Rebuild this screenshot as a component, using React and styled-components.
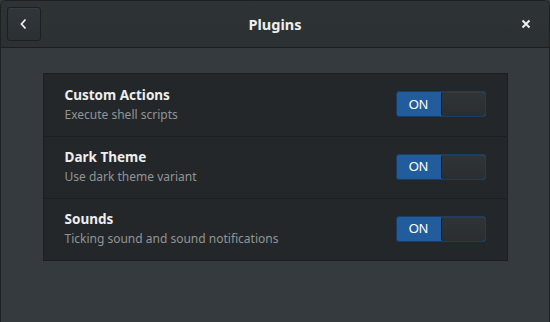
import React from 'react';
import styled, { createGlobalStyle } from 'styled-components';

const GlobalStyle = createGlobalStyle`
  html, body {
    margin: 0;
    padding: 0;
    background: #353a3e;
  }
  body {
    font-family: "Noto Sans", "Open Sans", sans-serif;
    color: #eeeeec;
  }
`;

const Window = styled.div`
  width: 550px;
  height: 322px;
  box-sizing: border-box;
  background: #353a3e;
  border: 1px solid #1e2122;
  border-bottom: none;
  border-radius: 6px 6px 0 0;
  overflow: hidden;
  display: flex;
  flex-direction: column;
`;

const HeaderBar = styled.header`
  height: 46px;
  flex-shrink: 0;
  display: grid;
  grid-template-columns: 48px 1fr 48px;
  align-items: center;
  background: linear-gradient(#2e3436, #2b3032);
  border-bottom: 1px solid #1c1f20;
`;

const BackButton = styled.button`
  width: 34px;
  height: 34px;
  margin-left: 6px;
  padding: 0;
  display: flex;
  align-items: center;
  justify-content: center;
  background: linear-gradient(#30363a, #2b3033);
  border: 1px solid #1b1f20;
  border-radius: 3px;
  box-shadow: inset 0 1px rgba(255, 255, 255, 0.04);
`;

const Title = styled.h1`
  margin: 0;
  text-align: center;
  font-size: 14.5px;
  font-weight: 700;
  color: #eeeeec;
`;

const CloseButton = styled.button`
  justify-self: center;
  width: 20px;
  height: 20px;
  padding: 0;
  margin-left: 2px;
  display: flex;
  align-items: center;
  justify-content: center;
  background: none;
  border: none;
`;

const Content = styled.main`
  flex: 1;
  padding-top: 25px;
  display: flex;
  justify-content: center;
  align-items: flex-start;
`;

const List = styled.ul`
  list-style: none;
  margin: 0;
  padding: 0;
  width: 465px;
  box-sizing: border-box;
  background: #232729;
  border: 1px solid #1b1f20;
`;

const Row = styled.li`
  height: 62px;
  box-sizing: border-box;
  display: flex;
  align-items: center;
  justify-content: space-between;
  padding: 0 21px 2px 21px;
  border-top: ${(p) => (p.first ? 'none' : '1px solid #1d2022')};
`;

const Labels = styled.div`
  display: flex;
  flex-direction: column;
  gap: 2px;
`;

const Name = styled.span`
  font-size: 13.5px;
  font-weight: 700;
  color: #eeeeec;
`;

const Description = styled.span`
  font-size: 12px;
  color: #929596;
`;

const Switch = styled.div`
  width: 90px;
  height: 26px;
  box-sizing: border-box;
  display: flex;
  border: 1px solid #1b3d63;
  border-radius: 3px;
  background: #215d9c;
  overflow: hidden;
`;

const SwitchLabel = styled.span`
  width: 44px;
  display: flex;
  align-items: center;
  justify-content: center;
  font-family: "Liberation Sans", Arial, sans-serif;
  font-size: 13px;
  font-weight: 400;
  color: #ffffff;
`;

const Knob = styled.span`
  flex: 1;
  background: linear-gradient(#2f3437, #2a2e31);
  border-left: 1px solid #1b1f20;
  border-radius: 2px;
  box-shadow: inset 0 1px rgba(255, 255, 255, 0.03);
`;

const plugins = [
  { name: 'Custom Actions', description: 'Execute shell scripts' },
  { name: 'Dark Theme', description: 'Use dark theme variant' },
  { name: 'Sounds', description: 'Ticking sound and sound notifications' },
];

export default function App() {
  return (
    <>
      <GlobalStyle />
      <Window>
        <HeaderBar>
          <BackButton aria-label="Back">
            <svg width="10" height="12" viewBox="0 0 10 12">
              <path d="M6.5 1.5 L2.5 6 L6.5 10.5" fill="none" stroke="#eeeeec" strokeWidth="1.8" />
            </svg>
          </BackButton>
          <Title>Plugins</Title>
          <CloseButton aria-label="Close">
            <svg width="10" height="10" viewBox="0 0 10 10">
              <path d="M1.5 1.5 L8.5 8.5 M8.5 1.5 L1.5 8.5" stroke="#eeeeec" strokeWidth="2" />
            </svg>
          </CloseButton>
        </HeaderBar>
        <Content>
          <List>
            {plugins.map((plugin, i) => (
              <Row key={plugin.name} first={i === 0}>
                <Labels>
                  <Name>{plugin.name}</Name>
                  <Description>{plugin.description}</Description>
                </Labels>
                <Switch>
                  <SwitchLabel>ON</SwitchLabel>
                  <Knob />
                </Switch>
              </Row>
            ))}
          </List>
        </Content>
      </Window>
    </>
  );
}
